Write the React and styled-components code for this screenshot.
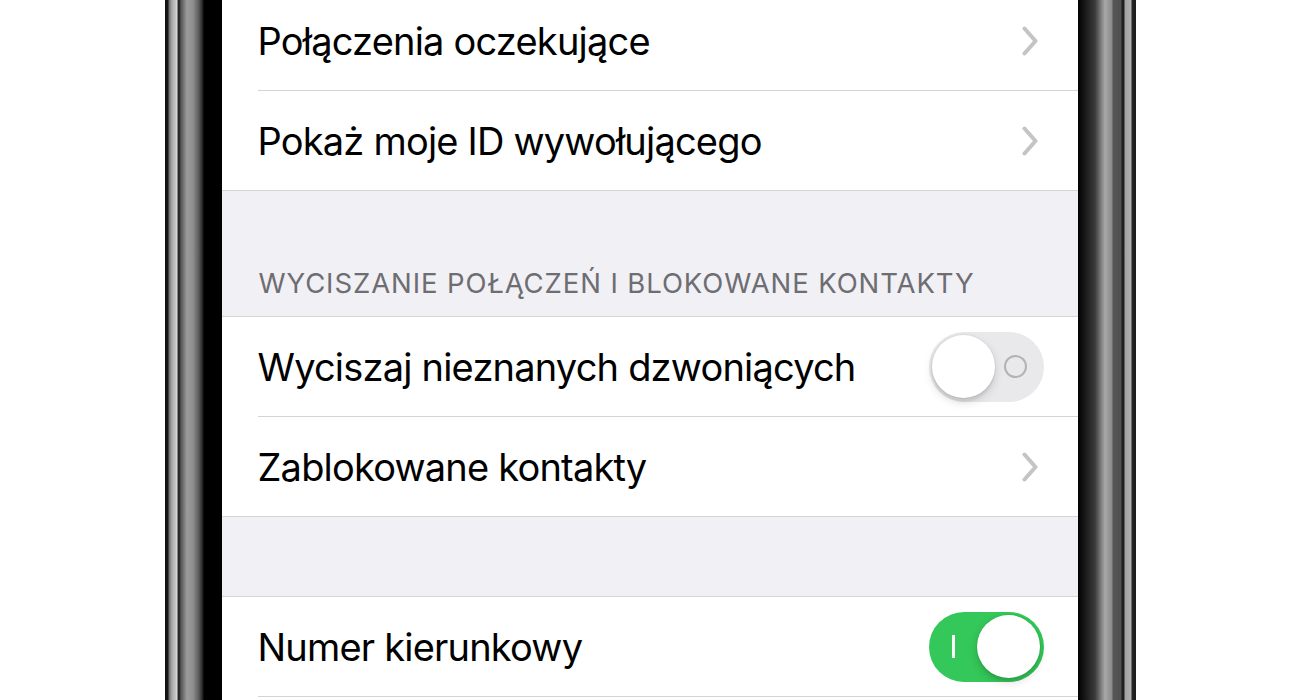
import React from "react";
import styled, { createGlobalStyle } from "styled-components";

const GlobalStyle = createGlobalStyle`
  html, body {
    margin: 0;
    padding: 0;
    background: #fff;
  }
  body {
    font-family: Inter, "Noto Sans", "Liberation Sans", sans-serif;
    -webkit-font-smoothing: antialiased;
  }
`;

const Page = styled.div`
  width: 100%;
  height: 700px;
  overflow: hidden;
  display: flex;
  justify-content: center;
`;

// steel edge of the handset, drawn as stripes across the side bezels
const Phone = styled.div`
  width: 971px;
  height: 100%;
  box-sizing: border-box;
  padding: 0 58px 0 57px;
  background: linear-gradient(
    to right,
    #111 0px,
    #151515 3px,
    #6e6e6e 4px,
    #a9a9a9 7px,
    #c9c9c9 11px,
    #e0e0e0 12px,
    #2a2a2a 13px,
    #222 14px,
    #565656 16px,
    #9c9c9c 22px,
    #8e8e8e 28px,
    #5a5a5a 34px,
    #1c1c1c 38px,
    #000 39px,
    #000 913px,
    #3a3a3a 930px,
    #a8a8a8 940px,
    #8a8a8a 947px,
    #565656 948px,
    #505050 956px,
    #202020 957px,
    #202020 959px,
    #a2a2a2 960px,
    #b0b0b0 966px,
    #252525 967px,
    #1a1a1a 971px
  );
`;

const Screen = styled.div`
  height: 100%;
  background: #f1f0f5;
  overflow: hidden;
`;

const Group = styled.div`
  background: #fff;
  border-top: 1px solid #d4d4d8;
  border-bottom: 1px solid #d4d4d8;
  margin-top: ${(p) => p.$top ?? 0}px;
`;

const Row = styled.div`
  height: 99px;
  display: flex;
  align-items: center;
  padding-left: 36px;
  padding-right: ${(p) => (p.$toggle ? 34 : 40)}px;
  & + & {
    border-top: 1px solid #d4d4d8;
    margin-left: 36px;
    padding-left: 0;
  }
`;

const Label = styled.span`
  flex: 1;
  font-size: 38px;
  letter-spacing: -0.8px;
  color: #000;
`;

const Spacer = styled.div`
  height: ${(p) => p.$h}px;
`;

const Header = styled.div`
  height: 125px;
  box-sizing: border-box;
  display: flex;
  align-items: flex-end;
  padding: 0 0 16px 37px;
  font-size: 27.5px;
  letter-spacing: 0.9px;
  color: #6d6d72;
`;

const Track = styled.div`
  width: 115px;
  height: 70px;
  border-radius: 35px;
  box-sizing: border-box;
  padding: 0 3.5px;
  display: flex;
  align-items: center;
  flex-direction: ${(p) => (p.$on ? "row-reverse" : "row")};
  background: ${(p) => (p.$on ? "#34c759" : "#e9e9eb")};
`;

const Knob = styled.div`
  width: 63px;
  height: 63px;
  border-radius: 50%;
  background: #fff;
  box-shadow: 0 0 0 1px rgba(0, 0, 0, 0.04), 0 4px 10px rgba(0, 0, 0, 0.15),
    0 4px 2px rgba(0, 0, 0, 0.05);
`;

const Mark = styled.div`
  flex: 1;
  display: flex;
  justify-content: center;
  align-items: center;
`;

const Ring = styled.div`
  width: 23px;
  height: 23px;
  box-sizing: border-box;
  border-radius: 50%;
  border: 2.5px solid #b3b3b6;
  margin-left: -4px;
`;

const Bar = styled.div`
  width: 2.5px;
  height: 23px;
  background: #fff;
  margin-right: 2px;
`;

const Chevron = () => (
  <svg width="16" height="30" viewBox="0 0 16 30" fill="none">
    <path
      d="M2.5 2.5 L13.5 15 L2.5 27.5"
      stroke="#c4c4c7"
      strokeWidth="4"
      strokeLinecap="round"
      strokeLinejoin="round"
    />
  </svg>
);

const Switch = ({ on }) => (
  <Track $on={on}>
    <Knob />
    <Mark>{on ? <Bar /> : <Ring />}</Mark>
  </Track>
);

const NavRow = ({ children }) => (
  <Row>
    <Label>{children}</Label>
    <Chevron />
  </Row>
);

const ToggleRow = ({ children, on }) => (
  <Row $toggle>
    <Label>{children}</Label>
    <Switch on={on} />
  </Row>
);

export default function App() {
  return (
    <>
      <GlobalStyle />
      <Page>
        <Phone>
          <Screen>
            <Group $top={-10}>
              <NavRow>Połączenia oczekujące</NavRow>
              <NavRow>Pokaż moje ID wywołującego</NavRow>
            </Group>
            <Header>WYCISZANIE POŁĄCZEŃ I BLOKOWANE KONTAKTY</Header>
            <Group>
              <ToggleRow on={false}>Wyciszaj nieznanych dzwoniących</ToggleRow>
              <NavRow>Zablokowane kontakty</NavRow>
            </Group>
            <Spacer $h={79} />
            <Group>
              <ToggleRow on>Numer kierunkowy</ToggleRow>
              <Row />
            </Group>
          </Screen>
        </Phone>
      </Page>
    </>
  );
}
